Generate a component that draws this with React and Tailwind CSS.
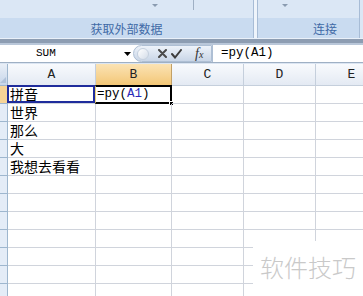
import React from 'react';

const cjk = { fontFamily: '"Noto Sans CJK SC", "Noto Sans", sans-serif' };
const mono = { fontFamily: '"Liberation Mono", "DejaVu Sans Mono", monospace' };

const columns = [
  { name: 'A', w: 'w-[88px]' },
  { name: 'B', w: 'w-[76px]' },
  { name: 'C', w: 'w-[72px]' },
  { name: 'D', w: 'w-[72px]' },
  { name: 'E', w: 'w-[72px]' },
];

const cellsA = ['拼音', '世界', '那么', '大', '我想去看看', '', '', '', '', '', '', ''];

const Arrow = () => (
  <svg width="6" height="4" viewBox="0 0 6 4">
    <path d="M0 0 L6 0 L3 3 Z" fill="#8a9bb0" />
  </svg>
);

const Ribbon = () => (
  <div className="h-[45px] flex flex-col bg-[#c4d6ec]">
    <div className="flex h-[38px]">
      {/* group: external data */}
      <div className="w-[254px] shrink-0 flex flex-col border-r border-[#a7bcd6]">
        <div className="h-[18px] bg-[#dbe7f5] relative">
          <div className="absolute left-[152px] top-[4px]"><Arrow /></div>
          <div className="absolute left-[193px] top-0 h-[10px] w-px bg-[#9fb0c4]" />
        </div>
        <div className="flex-1 bg-[#c9dbf0] flex items-center justify-center pt-[2px] text-[12px] text-[#3f6aa6]" style={cjk}>
          获取外部数据
        </div>
      </div>
      <div className="w-[3px] shrink-0 bg-[#eef4fb]" />
      {/* group: connections */}
      <div className="w-[103px] shrink-0 flex flex-col border-l border-r border-[#a7bcd6]">
        <div className="h-[18px] bg-[#dbe7f5] relative">
          <div className="absolute left-[24px] top-[4px]"><Arrow /></div>
        </div>
        <div className="flex-1 bg-[#c9dbf0] flex items-center justify-end pt-[2px] pr-[22px] text-[12px] text-[#3f6aa6]" style={cjk}>
          连接
        </div>
      </div>
      <div className="flex-1 bg-[#dbe7f5]" />
    </div>
    <div className="h-px bg-[#e9f0f9]" />
    <div className="h-[4px] bg-[#8d9db2]" />
    <div className="h-[2px] bg-[#b9c7d9]" />
  </div>
);

const FormulaBar = () => (
  <div className="h-[18px] flex items-stretch bg-white border-b border-[#9fb0c4]">
    <div className="w-[121px] shrink-0 flex items-center pl-[36px] text-[11px] text-black" style={mono}>
      SUM
    </div>
    <div className="w-[12px] shrink-0 flex items-center justify-center">
      <svg width="7" height="4" viewBox="0 0 7 4">
        <path d="M0 0 L7 0 L3.5 4 Z" fill="#000" />
      </svg>
    </div>
    <div className="w-[79px] shrink-0 flex items-center rounded-l-full bg-gradient-to-b from-[#eef3fa] to-[#c9d6e7] border border-[#aebfd4]">
      <div className="ml-[3px] w-[12px] h-[12px] rounded-full bg-gradient-to-br from-white to-[#d4dde9] border border-[#c5d0de]" />
      <svg className="ml-[9px]" width="9" height="9" viewBox="0 0 9 9">
        <path d="M1 1 L8 8 M8 1 L1 8" stroke="#4a4a4a" strokeWidth="2" strokeLinecap="round" />
      </svg>
      <svg className="ml-[4px]" width="11" height="10" viewBox="0 0 11 10">
        <path d="M1 5 L4 8.5 L10 1" stroke="#3d3d3d" strokeWidth="2" fill="none" strokeLinecap="round" />
      </svg>
      <span className="ml-[13px] italic text-[14px] text-[#333] leading-none" style={{ fontFamily: '"Liberation Serif", serif' }}>
        f<span className="text-[10px]">x</span>
      </span>
    </div>
    <div className="flex-1 flex items-center pl-[8px] text-[12.5px] text-black border-l border-[#aebfd4]" style={mono}>
      =py(A1)
    </div>
  </div>
);

const HeaderRow = () => (
  <div className="h-[23px] flex bg-[#dbe5f2]">
    <div className="w-[8px] shrink-0 h-[22px] mt-px bg-gradient-to-b from-[#e9eff7] to-[#c7d6ea] border-r border-b border-[#9eb6ce] relative">
      <svg className="absolute left-0 bottom-[2px]" width="6" height="6" viewBox="0 0 6 6">
        <path d="M6 0 L6 6 L0 6 Z" fill="#b1c3da" />
      </svg>
    </div>
    {columns.map((c) => (
      <div
        key={c.name}
        className={`${c.w} shrink-0 h-[22px] mt-px flex items-center justify-center border-r border-b text-[13px] text-[#222] ${
          c.name === 'B'
            ? 'bg-gradient-to-b from-[#fbe3b4] to-[#f3c776] border-[#c2a066]'
            : 'bg-gradient-to-b from-[#f8fafd] to-[#e4eaf3] border-[#c5cfdc]'
        }`}
        style={mono}
      >
        {c.name}
      </div>
    ))}
  </div>
);

const Row = ({ idx, text }) => (
  <div className="h-[18px] flex">
    <div
      className={`w-[8px] shrink-0 border-r border-b border-[#9eb6ce] ${
        idx === 0 ? 'bg-[#f7d497]' : 'bg-[#e4ecf7]'
      }`}
    />
    {columns.map((c, ci) => (
      <div
        key={c.name}
        className={`${c.w} shrink-0 border-r border-b border-[#d0d4dc] relative`}
      >
        {ci === 0 && text && (
          <div className="absolute left-[2px] bottom-[1px] h-[15px] flex items-end text-[14px] leading-[15px] text-black" style={cjk}>
            {text}
          </div>
        )}
        {idx === 0 && ci === 0 && (
          <div className="absolute -left-px -top-px right-0 bottom-0 border-2 border-[#1f2c9c]" />
        )}
        {idx === 0 && ci === 1 && (
          <>
            <div className="absolute -left-px -top-px -right-px -bottom-px border-2 border-l border-black border-l-[#e8d27a]" />
            <div className="absolute left-[1px] bottom-[1px] h-[15px] flex items-end text-[12.5px] leading-[15px]" style={mono}>
              <span className="text-black">=py(</span>
              <span className="text-[#2b2bb8]">A1</span>
              <span className="text-black">)</span>
            </div>
            <div className="absolute -right-[3px] -bottom-[3px] w-[5px] h-[5px] bg-black border border-white" />
          </>
        )}
      </div>
    ))}
  </div>
);

export default function App() {
  return (
    <div className="w-[363px] h-[296px] overflow-hidden bg-white relative">
      <Ribbon />
      <FormulaBar />
      <HeaderRow />
      <div className="flex flex-col">
        {cellsA.map((t, i) => (
          <Row key={i} idx={i} text={t} />
        ))}
      </div>
      {/* watermark */}
      <div
        className="absolute left-[253px] top-[241px] w-[110px] h-[55px] bg-white flex items-start justify-center pt-[12px] text-[24px] leading-[28px] text-[#c9c9c9] font-light"
        style={cjk}
      >
        软件技巧
      </div>
    </div>
  );
}
